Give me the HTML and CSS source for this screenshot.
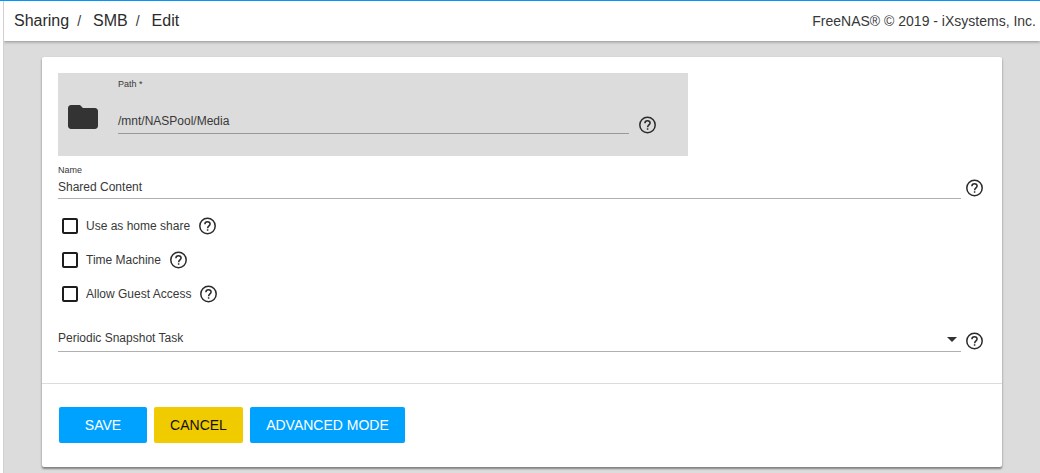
FILE: index.html
```html
<!DOCTYPE html>
<html lang="en">
<head>
  <meta charset="UTF-8" />
  <meta name="viewport" content="width=device-width, initial-scale=1.0"/>
  <title>FreeNAS - Edit SMB Share</title>
  <link rel="stylesheet" href="styles.css">
</head>
<body>

  <!-- shared icons -->
  <svg class="icon-defs" width="0" height="0">
    <symbol id="help" viewBox="0 0 20 20">
      <circle cx="10.5" cy="10" r="7.7"/>
      <path d="M7.9 8.2C7.9 6.7 9 5.8 10.5 5.8S13.1 6.7 13.1 8.1C13.1 9.8 10.6 10.1 10.6 12.2M10.6 13.3V14.8"/>
    </symbol>
    <symbol id="folder" viewBox="2 4 20 16">
      <path d="M10 4H4c-1.1 0-1.99.9-1.99 2L2 18c0 1.1.9 2 2 2h16c1.1 0 2-.9 2-2V8c0-1.1-.9-2-2-2h-8l-2-2z"/>
    </symbol>
  </svg>

  <div class="page">
    <div class="top-bar">
      <div class="breadcrumb">
        <a href="#">Sharing</a><span class="slash">/</span><a href="#">SMB</a><span class="slash">/</span><a href="#">Edit</a>
      </div>
      <div class="copyright">FreeNAS® © 2019 - iXsystems, Inc.</div>
    </div>

    <div class="content">
      <form class="card">
        <div class="fields">
          <div class="path-box">
            <svg class="folder"><use href="#folder"/></svg>
            <div class="path-field">
              <label class="small-label">Path *</label>
              <div class="path-value">/mnt/NASPool/Media</div>
            </div>
            <svg class="help"><use href="#help"/></svg>
          </div>

          <div class="row name-row">
            <div class="field">
              <label class="small-label">Name</label>
              <div class="value">Shared Content</div>
            </div>
            <svg class="help"><use href="#help"/></svg>
          </div>

          <div class="checks">
            <div class="check-row">
              <span class="checkbox"></span>
              <span class="check-label">Use as home share</span>
              <svg class="help"><use href="#help"/></svg>
            </div>
            <div class="check-row">
              <span class="checkbox"></span>
              <span class="check-label">Time Machine</span>
              <svg class="help"><use href="#help"/></svg>
            </div>
            <div class="check-row">
              <span class="checkbox"></span>
              <span class="check-label">Allow Guest Access</span>
              <svg class="help"><use href="#help"/></svg>
            </div>
          </div>

          <div class="row select-row">
            <div class="field select">
              <span>Periodic Snapshot Task</span>
              <span class="arrow"></span>
            </div>
            <svg class="help"><use href="#help"/></svg>
          </div>
        </div>

        <div class="actions">
          <button type="button" class="btn save">SAVE</button>
          <button type="button" class="btn cancel">CANCEL</button>
          <button type="button" class="btn advanced">ADVANCED MODE</button>
        </div>
      </form>
    </div>
  </div>

</body>
</html>
```

FILE: styles.css
```css
* {
  box-sizing: border-box;
}

body {
  margin: 0;
  height: 473px;
  overflow: hidden;
  padding-left: 3px;
  border-top: 1px solid #0095ff;
  background: #fff;
  font-family: "Liberation Sans", Arial, sans-serif;
  font-size: 12px;
  color: #383838;
}

.icon-defs {
  display: none;
}

.page {
  height: 472px;
  background: #dcdcdc;
  border-left: 1px solid #cfcfcf;
}

.top-bar {
  display: flex;
  justify-content: space-between;
  height: 40px;
  padding: 0 4px 0 10px;
  background: #fff;
  box-shadow: 0 1px 3px rgba(0, 0, 0, 0.35);
  clip-path: inset(0 0 -6px 0);
  line-height: 39px;
}

.breadcrumb {
  font-size: 16px;
}

.breadcrumb a {
  color: #2b2b2b;
  text-decoration: none;
}

.slash {
  margin: 0 12px 0 8px;
  font-size: 14px;
}

.copyright {
  font-size: 14px;
  line-height: 41px;
}

.content {
  padding: 16px 38px 0;
}

.card {
  height: 410px;
  background: #fff;
  border-radius: 2px;
  box-shadow: 0 2px 2px rgba(0, 0, 0, 0.35), 0 1px 3px rgba(0, 0, 0, 0.15);
}

.fields {
  height: 327px;
  padding: 16px 16px 0;
  border-bottom: 1px solid #dcdcdc;
}

.help {
  flex: none;
  width: 20px;
  height: 20px;
  fill: none;
  stroke: #2b2b2b;
  stroke-width: 1.5;
}

.small-label {
  display: block;
  font-size: 9px;
  line-height: 10px;
}

.path-box {
  display: flex;
  width: 630px;
  height: 83px;
  padding-left: 10px;
  background: #dcdcdc;
}

.folder {
  width: 30px;
  height: 24px;
  margin-top: 32px;
  fill: #333;
}

.path-field {
  width: 511px;
  height: 61px;
  margin-left: 20px;
  padding-top: 6px;
  border-bottom: 1px solid #999;
}

.path-value {
  margin-top: 25px;
  line-height: 14px;
}

.path-box .help {
  margin: 42px 0 0 8px;
}

.row {
  display: flex;
}

.field {
  width: 903px;
  border-bottom: 1px solid #b0b0b0;
}

.name-row .field {
  height: 43px;
  padding-top: 9px;
}

.value {
  margin-top: 5px;
  line-height: 14px;
}

.row .help {
  margin-left: 3px;
}

.name-row .help {
  margin-top: 22px;
}

.checks {
  padding: 10px 0 0 4px;
}

.check-row {
  display: flex;
  align-items: center;
  height: 34px;
}

.checkbox {
  width: 16px;
  height: 16px;
  margin-right: 8px;
  border: 2px solid #1d1d1d;
  border-radius: 2px;
}

.check-label {
  margin-right: 7px;
  line-height: 14px;
}

.select-row {
  margin-top: 20px;
}

.select {
  display: flex;
  justify-content: space-between;
  height: 21px;
  line-height: 14px;
}

.arrow {
  width: 10px;
  height: 5px;
  margin: 6px 4px 0 0;
  background: #333;
  clip-path: polygon(0 0, 100% 0, 50% 100%);
}

.actions {
  display: flex;
  gap: 7px;
  padding: 23px 17px;
}

.btn {
  height: 36px;
  padding: 0;
  border: none;
  border-radius: 2px;
  background: #00a2ff;
  color: #fff;
  font-family: inherit;
  font-size: 14px;
}

.save {
  width: 88px;
}

.cancel {
  width: 89px;
  background: #f0cb00;
  color: #111;
}

.advanced {
  width: 155px;
}
```
